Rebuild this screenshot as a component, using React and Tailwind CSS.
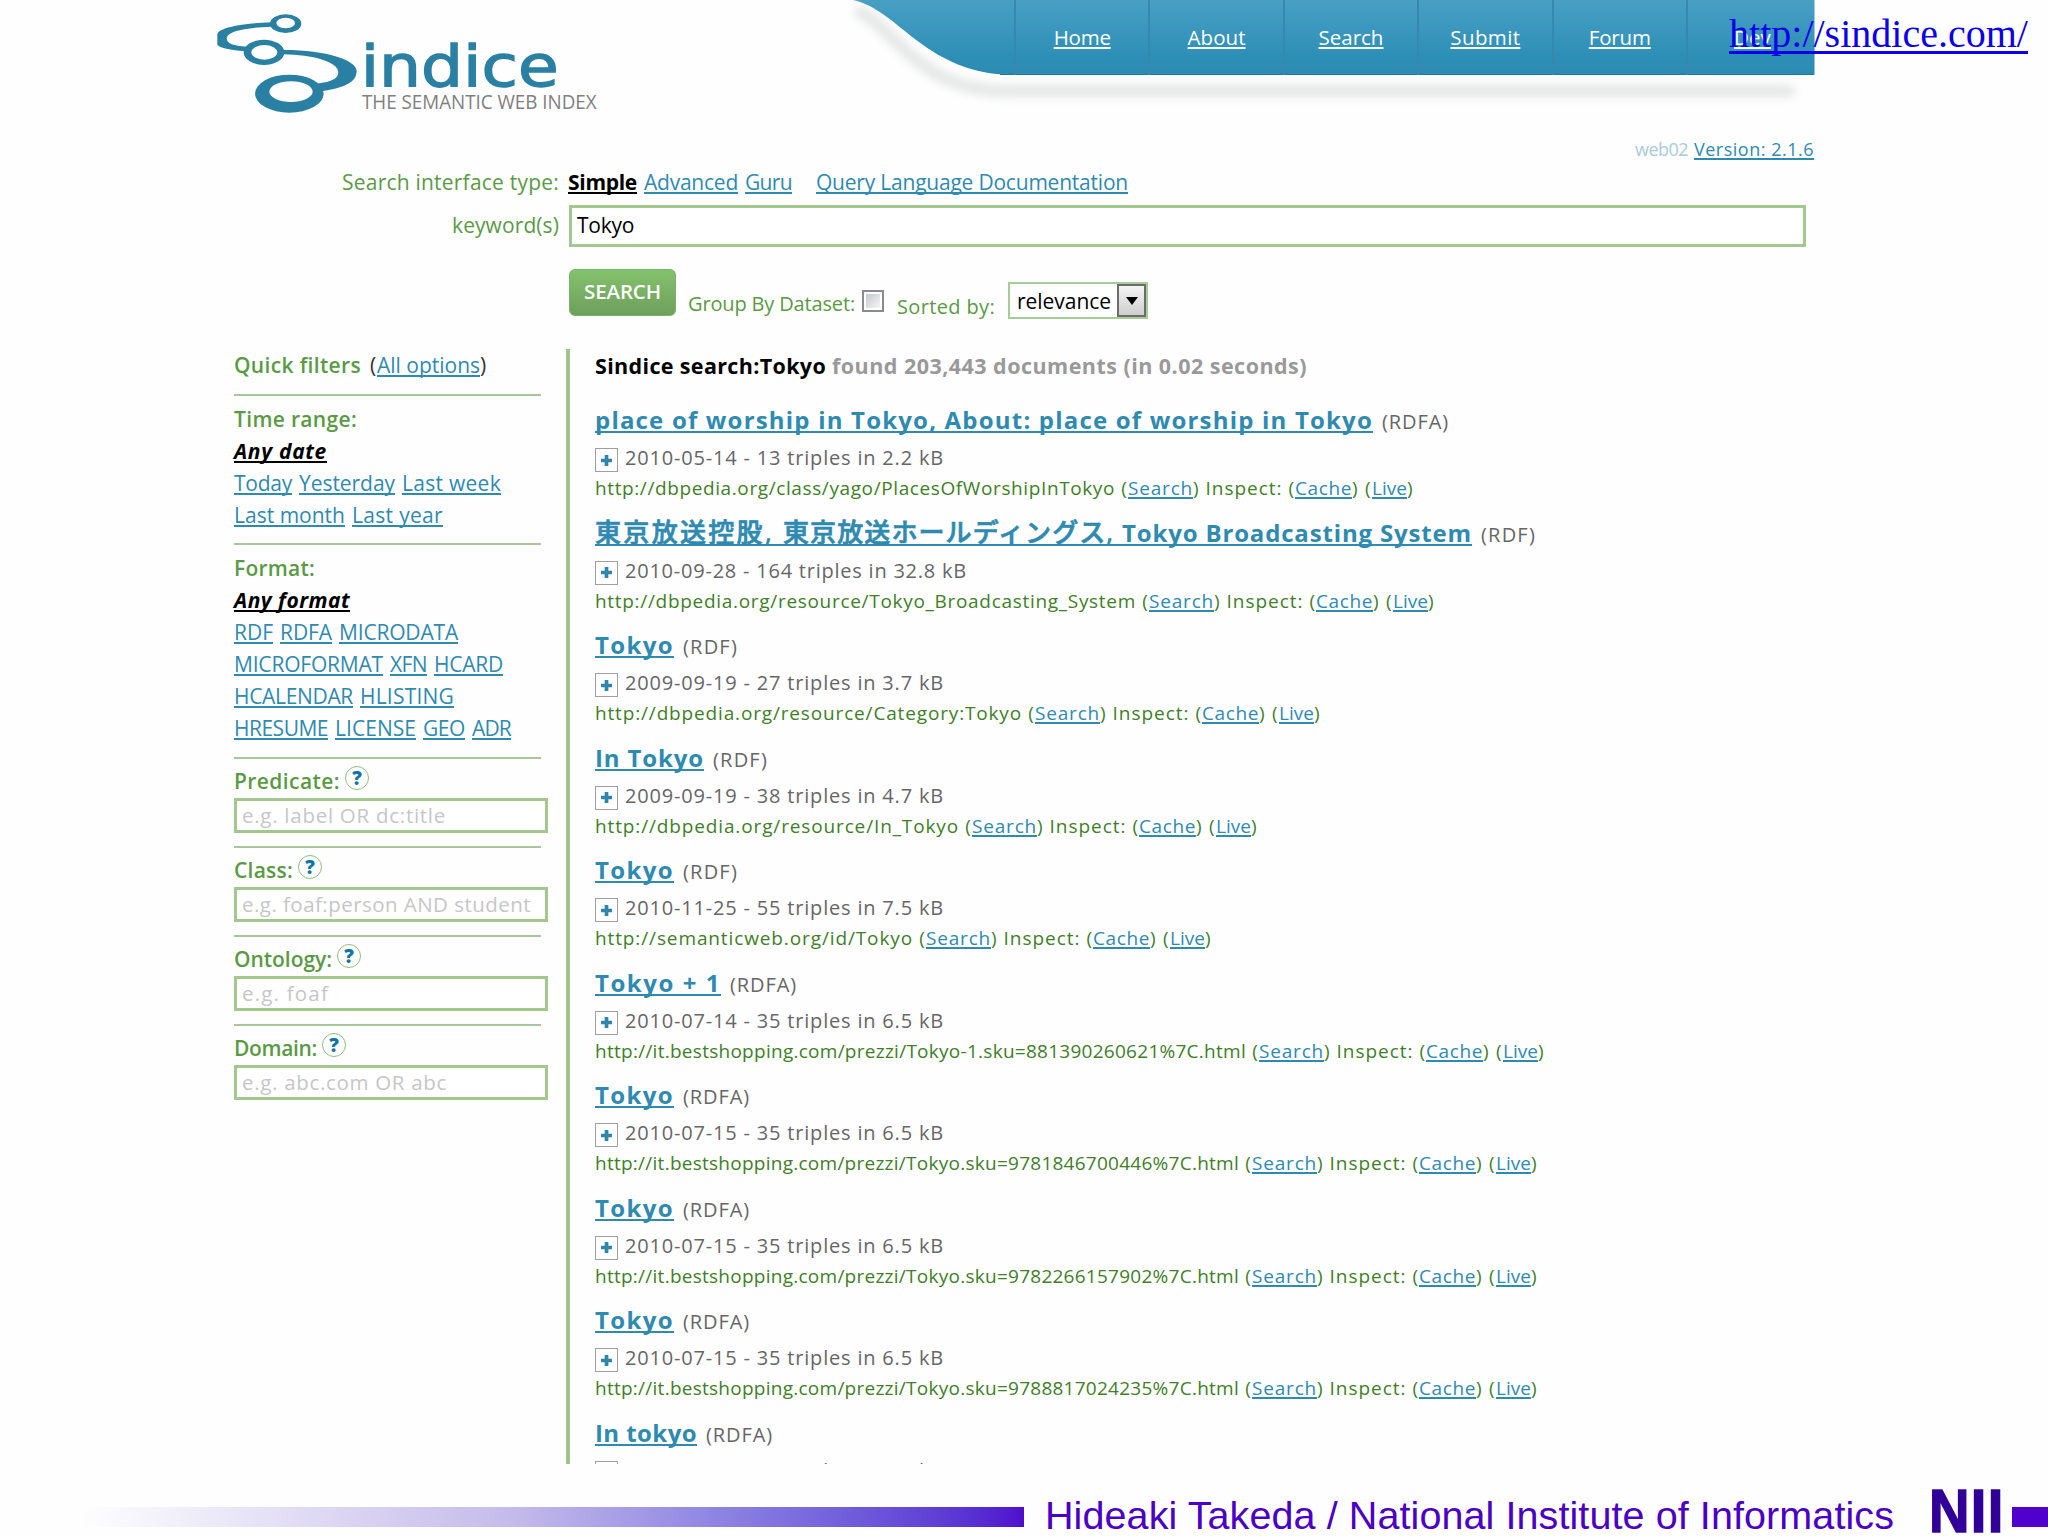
import React, { useLayoutEffect, useRef, useState } from 'react';

const LINK = 'text-[#2f8ab0] underline decoration-[1.5px] underline-offset-[2px] [text-decoration-skip-ink:none]';

const NAV = [
  ['Home', 57],
  ['About', 58],
  ['Search', 65],
  ['Submit', 70],
  ['Forum', 62],
];

const FORMATS = [
  [['RDF', 39], ['RDFA', 52], ['MICRODATA', 119]],
  [['MICROFORMAT', 149], ['XFN', 37], ['HCARD', 69]],
  [['HCALENDAR', 119], ['HLISTING', 94]],
  [['HRESUME', 94], ['LICENSE', 81], ['GEO', 42], ['ADR', 39]],
];

const DATES = [
  [['Today', 58], ['Yesterday', 96], ['Last week', 99]],
  [['Last month', 111], ['Last year', 91]],
];

const FIELDS = [
  { label: 'Predicate:', w: 105, hint: 'e.g. label OR dc:title', hintW: 204 },
  { label: 'Class:', w: 58, hint: 'e.g. foaf:person AND student', hintW: 289 },
  { label: 'Ontology:', w: 97, hint: 'e.g. foaf', hintW: 87 },
  { label: 'Domain:', w: 82, hint: 'e.g. abc.com OR abc', hintW: 205 },
];

const RESULTS = [
  { title: [['place of worship in Tokyo, About: place of worship in Tokyo', 778]], type: 'RDFA', meta: '2010-05-14 - 13 triples in 2.2 kB', url: 'http://dbpedia.org/class/yago/PlacesOfWorshipInTokyo', urlW: 520 },
  { title: [['東京放送控股, ', 188], ['東京放送ホールディングス, ', 339], ['Tokyo Broadcasting System', 350]], type: 'RDF', meta: '2010-09-28 - 164 triples in 32.8 kB', metaW: 342, url: 'http://dbpedia.org/resource/Tokyo_Broadcasting_System', urlW: 541 },
  { title: [['Tokyo', 79]], type: 'RDF', meta: '2009-09-19 - 27 triples in 3.7 kB', url: 'http://dbpedia.org/resource/Category:Tokyo', urlW: 427 },
  { title: [['In Tokyo', 109]], type: 'RDF', meta: '2009-09-19 - 38 triples in 4.7 kB', url: 'http://dbpedia.org/resource/In_Tokyo', urlW: 364 },
  { title: [['Tokyo', 79]], type: 'RDF', meta: '2010-11-25 - 55 triples in 7.5 kB', url: 'http://semanticweb.org/id/Tokyo', urlW: 318 },
  { title: [['Tokyo + 1', 126]], type: 'RDFA', meta: '2010-07-14 - 35 triples in 6.5 kB', url: 'http://it.bestshopping.com/prezzi/Tokyo-1.sku=881390260621%7C.html', urlW: 651 },
  { title: [['Tokyo', 79]], type: 'RDFA', meta: '2010-07-15 - 35 triples in 6.5 kB', url: 'http://it.bestshopping.com/prezzi/Tokyo.sku=9781846700446%7C.html', urlW: 644 },
  { title: [['Tokyo', 79]], type: 'RDFA', meta: '2010-07-15 - 35 triples in 6.5 kB', url: 'http://it.bestshopping.com/prezzi/Tokyo.sku=9782266157902%7C.html', urlW: 644 },
  { title: [['Tokyo', 79]], type: 'RDFA', meta: '2010-07-15 - 35 triples in 6.5 kB', url: 'http://it.bestshopping.com/prezzi/Tokyo.sku=9788817024235%7C.html', urlW: 644 },
  { title: [['In tokyo', 102]], type: 'RDFA', meta: '2010-07-14 - 27 triples in 6.1 kB' },
];

// Spreads the letters of a run so that it takes up w pixels
function Fit({ w, className = '', children }) {
  const ref = useRef(null);
  const [spacing, setSpacing] = useState(0);

  useLayoutEffect(() => {
    const natural = ref.current.getBoundingClientRect().width;
    setSpacing((w - natural) / children.length);
  }, []);

  return (
    <span ref={ref} className={`whitespace-pre ${className}`} style={{ letterSpacing: spacing }}>
      {children}
    </span>
  );
}

function Logo() {
  return (
    <svg className="ml-[200px] h-[130px] w-[420px] shrink-0" viewBox="0 0 1260 390">
      <g fill="#2a80a3">
        <path d="M215 67C122 70 52 84 52 104V134C62 146 95 150 145 154L140 140C100 138 80 131 80 114C84 92 140 83 215 80Z" />
        <path d="M248 150C375 149 470 180 470 213C470 248 430 264 362 274L350 251C398 245 415 236 415 216C413 186 340 164 248 163Z" />
        <path fillRule="evenodd" d="M210 71a47 28 0 1 0 94 0a47 28 0 1 0-94 0ZM229 69a28 16 0 1 1 56 0a28 16 0 1 1-56 0Z" />
        <path fillRule="evenodd" d="M131 157a61 38 0 1 0 122 0a61 38 0 1 0-122 0ZM154 157a39 22 0 1 1 78 0a39 22 0 1 1-78 0Z" />
        <path fillRule="evenodd" d="M165 281a103 57 0 1 0 206 0a103 57 0 1 0-206 0ZM208 275a65 31 0 1 1 130 0a65 31 0 1 1-130 0Z" />
      </g>
      <text x="482" y="257" textLength="594" lengthAdjust="spacingAndGlyphs" fontSize="171" fill="#2a80a3" stroke="#2a80a3" strokeWidth="4" fontFamily="DejaVu Sans, sans-serif">indice</text>
      <text x="486" y="326" textLength="704" lengthAdjust="spacingAndGlyphs" fontSize="61" fill="#808080" fontFamily="Open Sans, sans-serif">THE SEMANTIC WEB INDEX</text>
    </svg>
  );
}

function Nav() {
  return (
    <nav className="relative ml-[220px] flex h-[75px] w-[975px] text-[20.5px] leading-[74px] text-white">
      <svg className="absolute top-0 left-0 h-[120px] w-[985px]" viewBox="840 0 985 120">
        <defs>
          <linearGradient id="bar" x1="0" y1="0" x2="0" y2="75" gradientUnits="userSpaceOnUse">
            <stop offset="0" stopColor="#489fc4" />
            <stop offset="0.75" stopColor="#2e8fb6" />
            <stop offset="1" stopColor="#2b8ab2" />
          </linearGradient>
          <filter id="soft" x="830" y="-20" width="1000" height="150" filterUnits="userSpaceOnUse">
            <feGaussianBlur stdDeviation="5" />
          </filter>
        </defs>
        <path d="M856 10C896 26 915 90 1005 91H1794" fill="none" stroke="#e4e5e5" strokeWidth="12" filter="url(#soft)" />
        <path d="M853 0C900 10 925 75 1016 75H1814.500V0Z" fill="url(#bar)" />
        <path d="M1000 74.500H1814" stroke="#26799e" />
      </svg>
      <div className="relative w-[174px]" />
      {NAV.map(([name, w]) => (
        <a key={name} className="relative h-[75px] w-[134.400px] border-l-2 border-[#3888ad] text-center">
          <Fit w={w} className="underline decoration-2 underline-offset-[2px] [text-decoration-skip-ink:none]">{name}</Fit>
        </a>
      ))}
      <a className="relative h-[75px] flex-1 border-l-2 border-[#3888ad] pl-[46px]">
        <Fit w={37} className="underline decoration-2 underline-offset-[2px] [text-decoration-skip-ink:none]">Dev</Fit>
      </a>
    </nav>
  );
}

function SearchForm() {
  return (
    <div className="flex flex-col text-[21px] text-[#5b9a45]">
      <div className="flex h-[30px] leading-[30px]">
        <div className="w-[559px] text-right"><Fit w={217}>Search interface type:</Fit></div>
        <div className="ml-[9px] flex">
          <Fit w={69} className="font-bold text-black underline decoration-2 underline-offset-[2px] [text-decoration-skip-ink:none]">Simple</Fit>
          <span className="ml-[7px]"><Fit w={94} className={LINK}>Advanced</Fit></span>
          <span className="ml-[7px]"><Fit w={47} className={LINK}>Guru</Fit></span>
          <span className="ml-[24px]"><Fit w={312} className={LINK}>Query Language Documentation</Fit></span>
        </div>
      </div>
      <div className="mt-2 flex h-[42px]">
        <div className="w-[559px] text-right leading-[41px]"><Fit w={107}>keyword(s)</Fit></div>
        <div className="ml-[10px] w-[1237px] border-[3px] border-[#a3c88f] bg-white pl-[5px] leading-[35px] text-black">
          <Fit w={57}>Tokyo</Fit>
        </div>
      </div>
      <div className="mt-[22px] flex h-[58px] items-start text-[20px]">
        <button className="ml-[569px] h-[47px] w-[107px] rounded-[6px] border border-[#79b264] bg-linear-to-b from-[#83c26c] to-[#6f9f5d] pb-[3px] text-[20.500px] leading-[41px] font-semibold text-white">
          <Fit w={77}>SEARCH</Fit>
        </button>
        <span className="mt-[23px] ml-[12px] leading-6"><Fit w={167}>Group By Dataset:</Fit></span>
        <span className="mt-[21px] ml-[7px] h-[22px] w-[22px] border-2 border-[#8b8b8b] bg-white p-[2px]">
          <span className="block h-full w-full bg-linear-to-br from-[#c4c8cc] to-[#f6f6f6]" />
        </span>
        <span className="mt-[26px] ml-[13px] leading-6"><Fit w={98}>Sorted by:</Fit></span>
        <div className="mt-[13px] ml-[13px] flex h-[37px] w-[140px] border-2 border-[#a8cc95] bg-white text-[21px] leading-[34px] text-black">
          <span className="w-[107px] pl-[7px]"><Fit w={94}>relevance</Fit></span>
          <span className="flex h-[33px] flex-1 items-center justify-center border-2 border-[#6c6c6c] bg-linear-to-b from-[#f4f4f4] to-[#cfcfcf]">
            <svg className="h-[8px] w-[12px]" viewBox="0 0 12 8"><path d="M0 0h12L6 8Z" /></svg>
          </span>
        </div>
      </div>
    </div>
  );
}

function LinkLines({ lines }) {
  return lines.map((line) => (
    <div key={line[0][0]} className="flex gap-[7px]">
      {line.map(([text, w]) => (
        <Fit key={text} w={w} className={LINK}>{text}</Fit>
      ))}
    </div>
  ));
}

function Sidebar() {
  const picked = 'font-bold text-black italic underline decoration-2 underline-offset-[2px] [text-decoration-skip-ink:none]';
  return (
    <aside className="ml-[234px] w-[332px] text-[21px] leading-8 text-[#5b9a45]">
      <div className="flex h-[45px] leading-[32px]">
        <Fit w={127} className="font-semibold">Quick filters</Fit>
        <span className="ml-[9px] w-[7px] text-[#333]">(</span>
        <Fit w={103} className={LINK}>All options</Fit>
        <span className="text-[#333]">)</span>
      </div>
      <section className="h-[149px] w-[307px] border-t-2 border-[#a5c79a] pt-[7px]">
        <div><Fit w={123} className="font-semibold">Time range:</Fit></div>
        <div><Fit w={93} className={picked}>Any date</Fit></div>
        <LinkLines lines={DATES} />
      </section>
      <section className="h-[214px] w-[307px] border-t-2 border-[#a5c79a] pt-[7px]">
        <div><Fit w={81} className="font-semibold">Format:</Fit></div>
        <div><Fit w={116} className={picked}>Any format</Fit></div>
        <LinkLines lines={FORMATS} />
      </section>
      {FIELDS.map((f) => (
        <section key={f.label} className="h-[89px] w-[307px] border-t-2 border-[#a5c79a] pt-[6px]">
          <div className="flex h-[33px]">
            <Fit w={f.w + 1} className="font-semibold">{f.label}</Fit>
            <span className="mt-px ml-[5px] h-[24px] w-[24px] rounded-full border-[1.5px] border-[#8fc07a] text-center text-[19px] leading-[22px] font-extrabold text-[#0f74a6]">?</span>
          </div>
          <div className="h-[35px] w-[314px] border-[3px] border-[#a3c88f] bg-white pl-[5px] text-[20.500px] leading-[28px] text-[#c6c6c6]">
            <Fit w={f.hintW}>{f.hint}</Fit>
          </div>
        </section>
      ))}
    </aside>
  );
}

function Result({ item }) {
  return (
    <article className="h-[112.550px] shrink-0">
      <div className="flex h-[30px] items-baseline">
        <h3 className={`text-[24px] leading-[30px] font-bold ${LINK}`}>
          {item.title.map(([text, w]) => (
            <Fit key={text} w={w} className={/[^\x00-\x7f]/.test(text) ? 'text-[26px] leading-none font-medium [-webkit-text-stroke:0.7px_#2f8ab0]' : ''}>{text}</Fit>
          ))}
        </h3>
        <span className="ml-[9px] text-[20px] leading-none text-[#666]">
          <Fit w={item.type === 'RDF' ? 55 : 67}>{`(${item.type})`}</Fit>
        </span>
      </div>
      <div className="mt-[5px] flex h-[34px] text-[20px] leading-[35px] text-[#666]">
        <span className="mt-[8px] flex h-[24px] w-[23px] items-center justify-center border-[1.5px] border-[#a0a0a0]">
          <svg className="h-[11px] w-[11px]" viewBox="0 0 12 12"><path d="M6 0V12M0 6H12" stroke="#2f86aa" strokeWidth="4" /></svg>
        </span>
        <span className="ml-[7px]"><Fit w={item.metaW || 319}>{item.meta}</Fit></span>
      </div>
      {item.url && (
        <div className="h-7 text-[19px] leading-7 text-[#417f28]">
          <Fit w={item.urlW}>{item.url}</Fit>
          <Fit w={13}>{' ('}</Fit>
          <Fit w={65} className={LINK}>Search</Fit>
          <Fit w={102}>{') Inspect: ('}</Fit>
          <Fit w={57} className={LINK}>Cache</Fit>
          <Fit w={20}>{') ('}</Fit>
          <Fit w={35} className={LINK}>Live</Fit>
          <Fit w={6}>)</Fit>
        </div>
      )}
    </article>
  );
}

function Footer() {
  return (
    <footer className="flex h-[72px] text-[#4b00c6]">
      <div className="mt-[43px] h-[20px] w-[1024px] bg-linear-to-r from-[#fefefe] from-8% via-[#c5bbea] to-[#500cce]" />
      <div className="mt-[28px] ml-[21px] w-[862px] font-['Liberation_Sans',sans-serif] text-[39.500px] leading-[46px]">
        <Fit w={849}>Hideaki Takeda / National Institute of Informatics</Fit>
      </div>
      <div className="mt-[17px] ml-[22px] w-[83px] origin-left scale-x-[0.92] font-['Liberation_Sans',sans-serif] text-[61px] leading-[60px] font-bold text-[#300099] [-webkit-text-stroke:1.5px_#300099]">
        <Fit w={76}>NII</Fit>
      </div>
      <div className="mt-[43px] h-[20px] flex-1 bg-[#5000cc]" />
    </footer>
  );
}

export default function App() {
  return (
    <div className="relative flex h-[1536px] w-[2048px] flex-col overflow-hidden bg-[#fefefe] font-['Open_Sans','Noto_Sans_CJK_JP',sans-serif]">
      <header className="flex h-[137px]">
        <Logo />
        <Nav />
      </header>
      <div className="flex h-[30px] w-[1814px] justify-end gap-[6px] text-[18px] leading-6">
        <Fit w={53} className="text-[#a9cadb]">web02</Fit>
        <Fit w={120} className={LINK}>Version: 2.1.6</Fit>
      </div>
      <SearchForm />
      <div className="mt-[22px] flex h-[1115px] overflow-hidden">
        <Sidebar />
        <main className="flex w-[1300px] flex-col border-l-4 border-[#9fc58b] pl-[25px]">
          <h2 className="mb-[23px] h-[33px] shrink-0 text-[21.500px] leading-[33px] font-bold">
            <Fit w={237}>{'Sindice search:Tokyo '}</Fit>
            <Fit w={475} className="text-[#999]">found 203,443 documents (in 0.02 seconds)</Fit>
          </h2>
          {RESULTS.map((item, i) => (
            <Result key={i} item={item} />
          ))}
        </main>
      </div>
      <Footer />
      <a className="absolute top-[11px] left-[1729px] font-['Liberation_Serif',serif] text-[40px] leading-[46px] text-[#0b00e8] underline decoration-[3px] underline-offset-[4px] [text-decoration-skip-ink:none]">
        <Fit w={299}>http://sindice.com/</Fit>
      </a>
    </div>
  );
}
